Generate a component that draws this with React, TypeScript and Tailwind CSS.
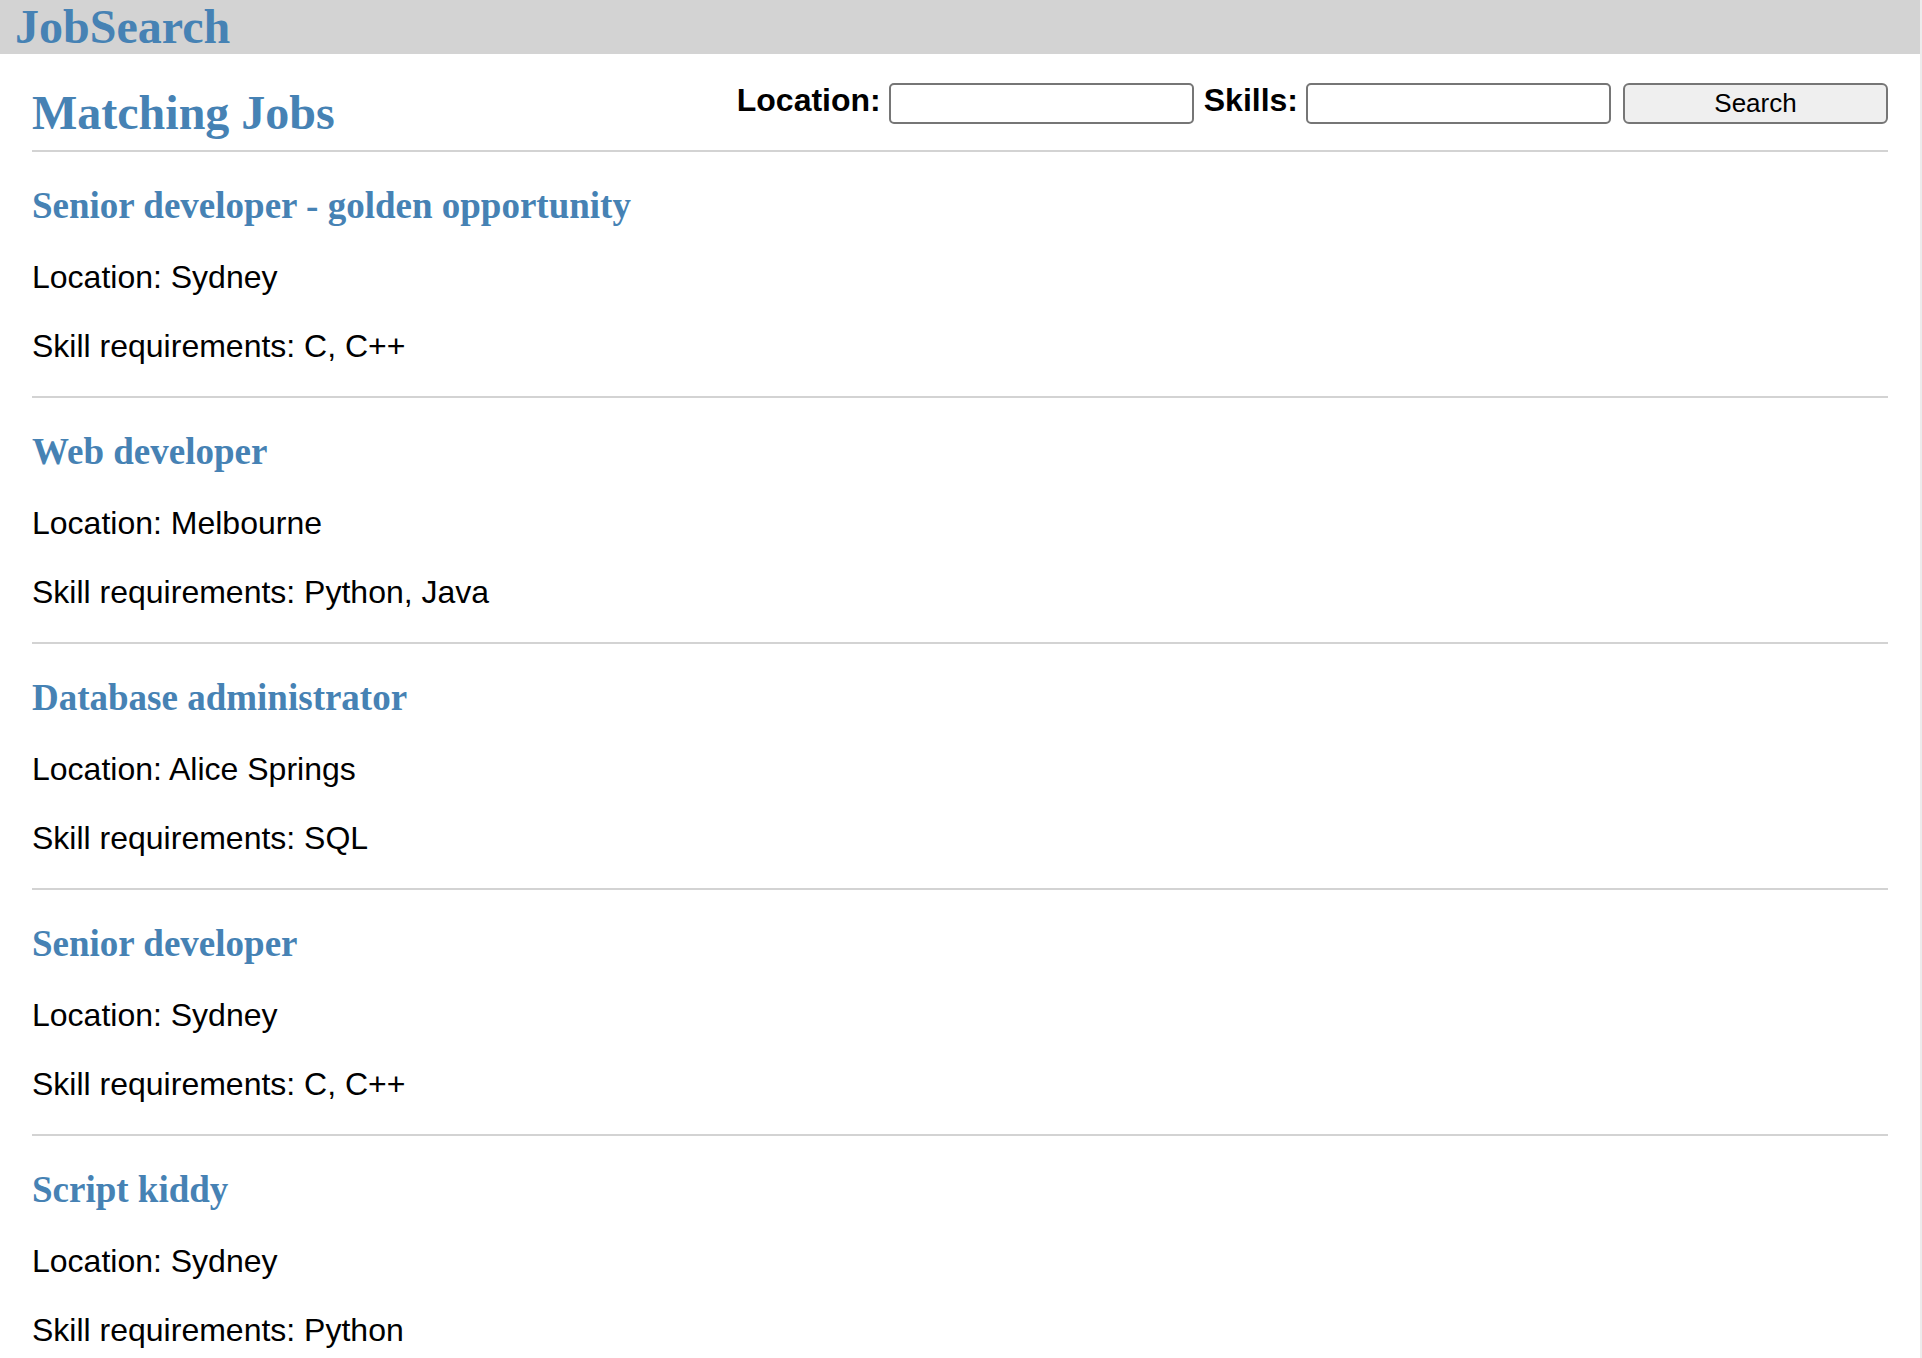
import React from "react";

interface Job {
  title: string;
  location: string;
  skills: string;
}

const jobs: Job[] = [
  { title: "Senior developer - golden opportunity", location: "Sydney", skills: "C, C++" },
  { title: "Web developer", location: "Melbourne", skills: "Python, Java" },
  { title: "Database administrator", location: "Alice Springs", skills: "SQL" },
  { title: "Senior developer", location: "Sydney", skills: "C, C++" },
  { title: "Script kiddy", location: "Sydney", skills: "Python" },
];

function JobItem({ title, location, skills }: Job) {
  return (
    <div className="border-b-2 border-[#d3d3d3] pt-[32px] pb-[31px]">
      <h3 className="font-['Liberation_Serif',serif] font-bold text-[37px] leading-[43px] text-[#4682b4]">
        {title}
      </h3>
      <p className="mt-[32px] text-[32px] leading-[37px]">Location: {location}</p>
      <p className="mt-[32px] text-[32px] leading-[37px]">Skill requirements: {skills}</p>
    </div>
  );
}

export default function App() {
  return (
    <div className="flex h-[1358px] overflow-hidden bg-white font-['Liberation_Sans',Arial,sans-serif] text-black">
      <div className="w-[1920px] shrink-0">
        {/* top bar */}
        <div className="h-[54px] bg-[#d3d3d3] pl-[15px]">
          <h1 className="font-['Liberation_Serif',serif] font-bold text-[48px] leading-[54px] text-[#4682b4]">
            JobSearch
          </h1>
        </div>

        <div className="px-[32px]">
          <div className="flex justify-between items-start border-b-2 border-[#d3d3d3] h-[98px]">
            <h2 className="mt-[31px] font-['Liberation_Serif',serif] font-bold text-[48px] leading-[55px] text-[#4682b4]">
              Matching Jobs
            </h2>

            <form
              className="mt-[29px] flex items-start"
              onSubmit={(e) => e.preventDefault()}
            >
              <label className="-mt-[1px] text-[32px] leading-[37px] font-bold">Location:</label>
              <input
                type="text"
                className="ml-[8px] h-[41px] w-[305px] border-2 border-[#767676] rounded-[5px] bg-white"
              />
              <label className="-mt-[1px] ml-[10px] text-[32px] leading-[37px] font-bold">Skills:</label>
              <input
                type="text"
                className="ml-[8px] h-[41px] w-[305px] border-2 border-[#767676] rounded-[5px] bg-white"
              />
              <button
                type="submit"
                className="ml-[12px] h-[41px] w-[265px] border-2 border-[#767676] rounded-[6px] bg-[#efefef] pb-[2px] text-[26px] leading-[30px] text-black"
              >
                Search
              </button>
            </form>
          </div>

          {jobs.map((job, i) => (
            <JobItem key={i} {...job} />
          ))}
        </div>
      </div>
      <div className="w-[2px] bg-[#ececec]" />
    </div>
  );
}
